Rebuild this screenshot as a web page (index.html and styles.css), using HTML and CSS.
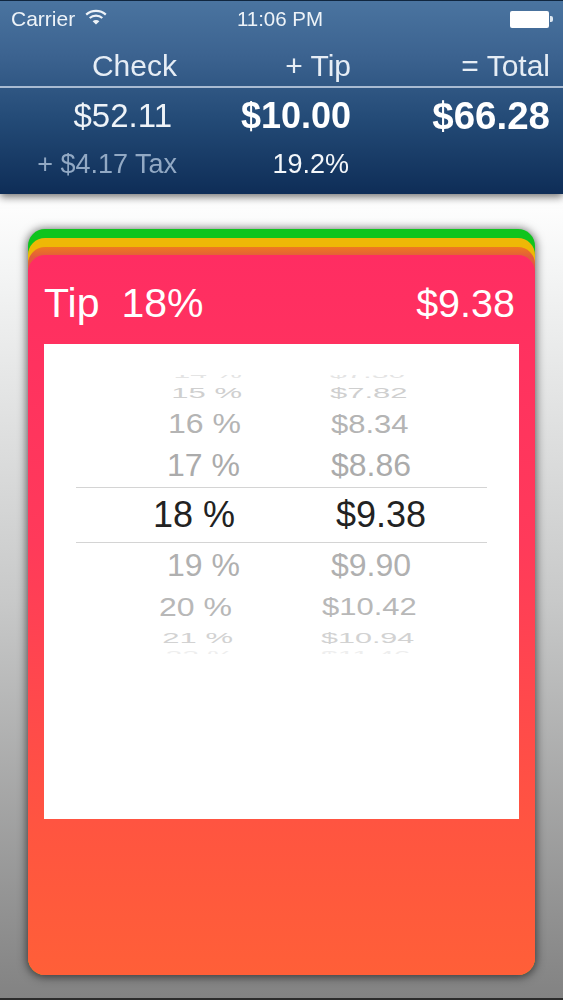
FILE: index.html
```html
<!DOCTYPE html>
<html lang="en">
<head>
<meta charset="utf-8">
<title>Tip</title>
<link rel="stylesheet" href="styles.css">
</head>
<body>
<div class="page">
  <header class="top">
    <div class="status">
      <div class="status-left">
        <span>Carrier</span>
        <svg class="wifi" viewBox="0 0 22 16" width="22" height="16"><path d="M1.2 5.6C6.6.6 15.4.6 20.8 5.6" fill="none" stroke="#eef3f8" stroke-width="2.2"/><path d="M4.7 9C8.2 5.9 13.800 5.900 17.300 9" fill="none" stroke="#eef3f8" stroke-width="2.200"/><path d="M11 15.600 7.600 12.200C9.500 10.600 12.500 10.600 14.400 12.200Z" fill="#eef3f8"/></svg>
      </div>
      <div class="clock">11:06 PM</div>
      <div class="battery"><span class="battery-body"></span><span class="battery-nub"></span></div>
    </div>
    <div class="cols labels">
      <div>Check</div><div>+ Tip</div><div>= Total</div>
    </div>
    <div class="rule"></div>
    <div class="cols values">
      <div class="check">$52.11</div><div class="strong">$10.00</div><div class="strong total">$66.28</div>
    </div>
    <div class="cols subs">
      <div class="tax">+ $4.17 Tax</div><div class="pct-sub">19.2%</div><div></div>
    </div>
  </header>
  <main class="stage">
    <div class="stack green">
      <div class="stack yellow">
        <div class="stack orange">
          <section class="card">
            <div class="card-head">
              <div class="tip-label"><span>Tip</span><span>18%</span></div>
              <div>$9.38</div>
            </div>
            <div class="panel">
              <div class="picker">
                <div class="row r14"><span class="pct">14 %</span><span class="amt">$7.30</span></div>
                <div class="row r15"><span class="pct">15 %</span><span class="amt">$7.82</span></div>
                <div class="row r16"><span class="pct">16 %</span><span class="amt">$8.34</span></div>
                <div class="row r17"><span class="pct">17 %</span><span class="amt">$8.86</span></div>
                <div class="row r18"><span class="pct">18 %</span><span class="amt">$9.38</span></div>
                <div class="row r19"><span class="pct">19 %</span><span class="amt">$9.90</span></div>
                <div class="row r20"><span class="pct">20 %</span><span class="amt">$10.42</span></div>
                <div class="row r21"><span class="pct">21 %</span><span class="amt">$10.94</span></div>
                <div class="row r22"><span class="pct">22 %</span><span class="amt">$11.46</span></div>
              </div>
            </div>
          </section>
        </div>
      </div>
    </div>
  </main>
</div>
</body>
</html>
```

FILE: styles.css
```css
* { box-sizing: border-box; }
html, body { margin: 0; padding: 0; }
body { width: 563px; height: 1000px; overflow: hidden; font-family: "Liberation Sans", Arial, sans-serif; background: #7f7f7f; }

.page {
  width: 563px;
  height: 1000px;
  display: flex;
  flex-direction: column;
  background: linear-gradient(180deg, #ffffff 194px, #f4f5f5 270px, #c8c9c9 600px, #828282 1000px);
  border-bottom: 2px solid #2b2b2b;
  filter: blur(.4px);
}

.top {
  height: 194px;
  flex: none;
  border-top: 1px solid #10263f;
  background: linear-gradient(180deg, #4a74a0 0%, #3c6390 28%, #234a76 62%, #0e2d57 100%);
  box-shadow: 0 3px 8px rgba(0, 0, 0, .55);
  color: #fff;
  position: relative;
  z-index: 1;
}

.status {
  height: 36px;
  padding: 0 10px 0 11px;
  display: grid;
  grid-template-columns: 1fr auto 1fr;
  align-items: center;
  color: #eef3f8;
}
.status-left { display: flex; align-items: center; gap: 10px; font-size: 21px; }
.wifi { margin-top: -4px; }
.clock { font-size: 20.5px; margin-left: -4px; font-weight: 400; }
.battery { justify-self: end; display: flex; align-items: center; }
.battery-body { width: 39px; height: 17px; background: #fff; border-radius: 2px; }
.battery-nub { width: 3px; height: 6px; margin-left: 1px; background: #dfe8f1; border-radius: 0 2px 2px 0; }

.cols {
  display: grid;
  grid-template-columns: 177px 174px 199px;
  padding-right: 13px;
  text-align: right;
}
.labels { height: 49px; padding-top: 8px; align-items: center; font-size: 30px; color: #e6edf5; }
.rule { height: 2px; background: #a9bbd2; }
.values { height: 56px; align-items: center; font-size: 33px; }
.check { color: #eef3f8; padding-right: 5px; }
.strong { font-weight: 700; font-size: 36px; }
.total { font-size: 38.500px; }
.subs { height: 40px; align-items: center; font-size: 27px; }
.tax { color: #92a9c4; }
.pct-sub { color: #f4f7fa; padding-right: 2px; }

.stage { flex: 1; padding: 35px 28px 0; }
.stack { border-radius: 17px; padding-top: 9px; }
.green {
  height: 746px;
  background: #0fc41d;
  box-shadow: 0 1px 10px 1px rgba(0, 0, 0, .6);
}
.yellow { height: 100%; background: #eeb806; }
.orange { height: 100%; padding-top: 8px; background: linear-gradient(180deg, #ee7a1f, #e25c3c 10px); }

.card {
  height: 100%;
  padding: 0 16px;
  border-radius: 17px;
  background: linear-gradient(180deg, #ff2d62 0%, #ff3a5a 40%, #ff5540 80%, #ff5f38 100%);
}
.card-head {
  height: 89px;
  padding: 7px 4px 0 0;
  display: flex;
  justify-content: space-between;
  align-items: center;
  color: #fff;
  font-size: 39.5px;
}
.tip-label { display: flex; gap: 22px; font-size: 41px; }

.panel { height: 475px; background: #fff; padding-top: 31px; }
.picker { display: flex; flex-direction: column; }

.row { display: flex; align-items: center; overflow: hidden; color: #ababab; font-size: 32px; flex: none; }
.row span { display: block; white-space: nowrap; flex: none; text-align: right; }
.amt { text-align: left; }

.r14 { height: 6px; font-size: 30px; color: #e4e4e4; align-items: flex-end; }
.r14 .pct { width: 198px; transform: scaleY(.45); transform-origin: bottom; }
.r14 .amt { margin-left: 88px; transform: scaleY(.45); transform-origin: bottom; }

.r15 { height: 23px; font-size: 31px; color: #cfcfcf; }
.r15 .pct { width: 198px; transform: scaleY(.5); }
.r15 .amt { margin-left: 88px; transform: scaleY(.5); }

.r16 { height: 40px; font-size: 32px; color: #b4b4b4; }
.r16 .pct { width: 197px; transform: scaleY(.85); }
.r16 .amt { margin-left: 90px; font-size: 31px; transform: scaleY(.85); }

.r17 { height: 43px; }
.r17 .pct { width: 196px; }
.r17 .amt { margin-left: 91px; }

.r18 {
  height: 56px;
  margin: 0 32px;
  color: #222;
  font-size: 36px;
  border-top: 1px solid #d4d4d4;
  border-bottom: 1px solid #d4d4d4;
}
.r18 .pct { width: 159px; }
.r18 .amt { margin-left: 101px; }

.r19 { height: 44px; color: #b0b0b0; }
.r19 .pct { width: 196px; }
.r19 .amt { margin-left: 91px; }

.r20 { height: 40px; font-size: 32px; color: #b8b8b8; }
.r20 .pct { width: 188px; transform: scaleY(.8); }
.r20 .amt { margin-left: 90px; font-size: 31px; transform: scaleY(.8); }

.r21 { height: 21px; font-size: 31px; color: #d2d2d2; }
.r21 .pct { width: 189px; transform: scaleY(.5); }
.r21 .amt { margin-left: 88px; font-size: 30.500px; transform: scaleY(.5); }

.r22 { height: 6px; font-size: 30px; color: #eeeeee; align-items: flex-start; }
.r22 .pct { width: 190px; transform: scaleY(.45); transform-origin: top; }
.r22 .amt { margin-left: 87px; transform: scaleY(.45); transform-origin: top; }
```
